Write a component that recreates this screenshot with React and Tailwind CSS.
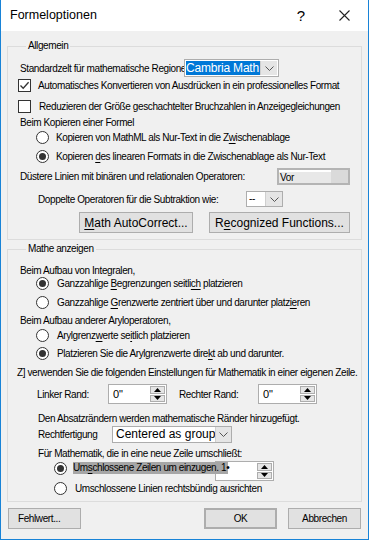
const Chevron = () => (
  <svg width="9" height="5" viewBox="0 0 9 5">
    <path d="M0.5 0.5 L4.5 4.5 L8.5 0.5" fill="none" stroke="#555" strokeWidth="1" />
  </svg>
);

const Check = ({ checked }) => (
  <span className="w-[13px] h-[13px] shrink-0 border border-[#333] bg-white flex items-center justify-center">
    {checked && (
      <svg width="11" height="11" viewBox="0 0 11 11">
        <path d="M1.5 5.5 L4.2 8.3 L9.6 2.3" fill="none" stroke="#333" strokeWidth="1.3" />
      </svg>
    )}
  </span>
);

const Radio = ({ checked }) => (
  <span className="w-[13px] h-[13px] shrink-0 rounded-full border border-[#333] bg-white flex items-center justify-center">
    {checked && <span className="w-[7px] h-[7px] rounded-full bg-[#333]" />}
  </span>
);

const Spin = ({ value, className = '' }) => (
  <div className={`relative h-[20px] w-[59px] shrink-0 border border-[#adadad] bg-white flex ${className}`}>
    <span className="flex-1 pl-[4px] leading-[18px] text-[11px] tracking-[-0.2px]">{value}</span>
    <div className="w-[16px] flex flex-col gap-[1px] py-[1px] pr-[1px]">
      <div className="flex-1 border border-[#adadad] bg-[#e5e5e5] flex items-center justify-center">
        <svg width="7" height="4" viewBox="0 0 7 4"><path d="M0 4 L3.5 0 L7 4 Z" fill="#000" /></svg>
      </div>
      <div className="flex-1 border border-[#adadad] bg-[#e5e5e5] flex items-center justify-center">
        <svg width="7" height="4" viewBox="0 0 7 4"><path d="M0 0 L3.5 4 L7 0 Z" fill="#000" /></svg>
      </div>
    </div>
  </div>
);

const Button = ({ children, className = '' }) => (
  <button className={`h-[21px] border border-[#adadad] bg-[#e1e1e1] flex items-center justify-center ${className}`}>
    {children}
  </button>
);

const U = ({ children }) => <span className="underline underline-offset-[2px]">{children}</span>;

export default function App() {
  return (
    <div className="w-[369px] h-[540px] bg-[#f0f0f0] border-x border-b border-[#1883d7] flex flex-col font-['Liberation_Sans',sans-serif] text-[10px] tracking-[-0.4px] text-black overflow-hidden">
      {/* Title bar */}
      <div className="h-[31px] shrink-0 bg-white flex items-center tracking-normal">
        <span className="ml-[9px] text-[12.5px]">Formeloptionen</span>
        <span className="ml-auto text-[15px] leading-none">?</span>
        <svg className="ml-[34px] mr-[18px]" width="11" height="11" viewBox="0 0 11 11">
          <path d="M0.5 0.5 L10.5 10.5 M10.5 0.5 L0.5 10.5" stroke="#222" strokeWidth="1.1" />
        </svg>
      </div>

      <div className="px-[6px] flex flex-col">
        {/* Allgemein */}
        <fieldset className="mt-[8px] border border-[#dcdcdc] pl-[12px] pb-[6px]">
          <legend className="ml-[6px] px-[2px] leading-[14px]">Allgemein</legend>

          <div className="mt-[6px] h-[18px] flex items-center">
            <span className="w-[164px] shrink-0 whitespace-nowrap">Standardzelt für mathematische Regionen</span>
            <div className="relative h-[18px] w-[95px] border border-[#adadad] bg-white flex p-[1px]">
              <span className="w-[74px] bg-[#0078d7] text-white text-[12px] tracking-[-0.2px] leading-[14px] whitespace-nowrap overflow-hidden">Cambria Math</span>
              <span className="flex-1 bg-[#e5e5e5] flex items-center justify-center border-l border-[#cfcfcf]"><Chevron /></span>
            </div>
          </div>

          <div className="mt-[2px] h-[13px] flex items-center ml-[-2px] gap-[7px]">
            <Check checked />
            <span className="whitespace-nowrap">Automatisches Konvertieren von Ausdrücken in ein professionelles Format</span>
          </div>
          <div className="mt-[8px] h-[13px] flex items-center ml-[-2px] gap-[8px]">
            <Check />
            <span className="whitespace-nowrap">Reduzieren der Größe geschachtelter Bruchzahlen in Anzeigegleichungen</span>
          </div>
          <div className="mt-[3px] h-[13px] flex items-center">Beim Kopieren einer Formel</div>
          <div className="mt-[2px] h-[13px] flex items-center ml-[16px] gap-[7px]">
            <Radio />
            <span className="whitespace-nowrap">Kopieren von MathML als Nur-Text in die Z<U>w</U>ischenablage</span>
          </div>
          <div className="mt-[6px] h-[13px] flex items-center ml-[16px] gap-[7px]">
            <Radio checked />
            <span className="whitespace-nowrap">Kopieren <U>d</U>es linearen Formats in die Zwischenablage als Nur-Text</span>
          </div>

          <div className="mt-[5px] h-[17px] flex items-center">
            <span className="w-[257px] shrink-0 whitespace-nowrap">Düstere Linien mit binären und relationalen Operatoren:</span>
            <div className="h-[17px] w-[73px] border-2 border-[#b4b4b4] bg-[#e5e5e5] flex">
              <span className="w-[52px] bg-[#e8e8e8] border-t-2 border-white pl-[1px] leading-[11px]">Vor</span>
              <span className="flex-1 bg-[#dadada]" />
            </div>
          </div>

          <div className="mt-[6px] h-[16px] flex items-center pl-[18px]">
            <span className="w-[208px] shrink-0 whitespace-nowrap">Doppelte Operatoren für die Subtraktion wie:</span>
            <div className="h-[16px] w-[37px] border border-[#adadad] bg-white flex">
              <span className="w-[18px] pl-[2px] leading-[14px]">--</span>
              <span className="flex-1 bg-[#e5e5e5] border-l border-[#cfcfcf] flex items-center justify-center"><Chevron /></span>
            </div>
          </div>

          <div className="mt-[5px] flex ml-[59px] gap-[16px] text-[12px] tracking-normal">
            <Button className="w-[114px]"><U>M</U>ath AutoCorrect...</Button>
            <Button className="w-[141px]">R<U>e</U>cognized Functions...</Button>
          </div>
        </fieldset>

        {/* Mathe anzeigen */}
        <fieldset className="mt-[2px] border border-[#dcdcdc] pl-[12px] pb-[6px]">
          <legend className="ml-[6px] px-[2px] leading-[14px]">Mathe anzeigen</legend>

          <div className="mt-[8px] h-[13px] flex items-center">Beim Aufbau von Integralen,</div>
          <div className="mt-0 h-[13px] flex items-center ml-[16px] gap-[8px]">
            <Radio checked />
            <span className="whitespace-nowrap">Ganzzahlige <U>B</U>egrenzungen seitli<U>ch</U> platzieren</span>
          </div>
          <div className="mt-[6px] h-[13px] flex items-center ml-[16px] gap-[8px]">
            <Radio />
            <span className="whitespace-nowrap">Ganzzahlige <U>G</U>renzwerte zentriert über und darunter platz<U>ie</U>ren</span>
          </div>
          <div className="mt-[5px] h-[13px] flex items-center">Beim Aufbau anderer Aryloperatoren,</div>
          <div className="mt-[2px] h-[13px] flex items-center ml-[16px] gap-[8px]">
            <Radio />
            <span className="whitespace-nowrap">Arylgrenz<U>w</U>erte se<U>i</U>tlich platzieren</span>
          </div>
          <div className="mt-[5px] h-[13px] flex items-center ml-[16px] gap-[8px]">
            <Radio checked />
            <span className="whitespace-nowrap">Platzieren Sie die Arylgrenzwerte dire<U>k</U>t ab und darunter.</span>
          </div>
          <div className="mt-[6px] h-[13px] flex items-center ml-[-3px] whitespace-nowrap">Z] verwenden Sie die folgenden Einstellungen für Mathematik in einer eigenen Zeile.</div>

          <div className="mt-[5px] h-[20px] flex items-center ml-[17px]">
            <span className="w-[71px] shrink-0">Linker Rand:</span>
            <Spin value={'0"'} />
            <span className="ml-[12px] w-[79px] shrink-0">Rechter Rand:</span>
            <Spin value={'0"'} />
          </div>

          <div className="mt-[8px] h-[13px] flex items-center ml-[18px] whitespace-nowrap">Den Absatzrändern werden mathematische Ränder hinzugefügt.</div>

          <div className="mt-[1px] h-[17px] flex items-center ml-[18px]">
            <span className="w-[74px] shrink-0">Rechtfertigung</span>
            <div className="h-[17px] w-[120px] border border-[#adadad] bg-white flex">
              <span className="flex-1 pl-[3px] text-[12px] tracking-normal leading-[15px] whitespace-nowrap">Centered as group</span>
              <span className="w-[20px] bg-[#e5e5e5] border-l border-[#cfcfcf] flex items-center justify-center"><Chevron /></span>
            </div>
          </div>

          <div className="mt-[4px] h-[13px] flex items-center ml-[18px] whitespace-nowrap">Für Mathematik, die in eine neue Zeile umschließt:</div>

          <div className="mt-[1px] h-[20px] flex items-start ml-[34px]">
            <span className="mt-[1px]"><Radio checked /></span>
            <span className="relative z-10 mt-[1px] ml-[6px] w-[155px] h-[12px] leading-[12px] bg-[#a6a6a6] whitespace-nowrap shrink-0">Um<U>s</U>chlossene Zeilen um einzugen. 1•</span>
            <Spin value="" className="ml-[-13px] w-[58px]" />
          </div>

          <div className="mt-[1px] h-[13px] flex items-center ml-[34px] gap-[8px]">
            <Radio />
            <span className="whitespace-nowrap">Umschlossene Linien rechtsbündig ausrichten</span>
          </div>
        </fieldset>

        {/* Footer buttons */}
        <div className="mt-[6px] flex">
          <Button className="ml-[1px] w-[73px] justify-start pl-[9px]">Fehlwert...</Button>
          <Button className="ml-[123px] w-[73px] border-2 border-[#0078d7]">OK</Button>
          <Button className="ml-[11px] w-[73px]">Abbrechen</Button>
        </div>
      </div>
    </div>
  );
}
